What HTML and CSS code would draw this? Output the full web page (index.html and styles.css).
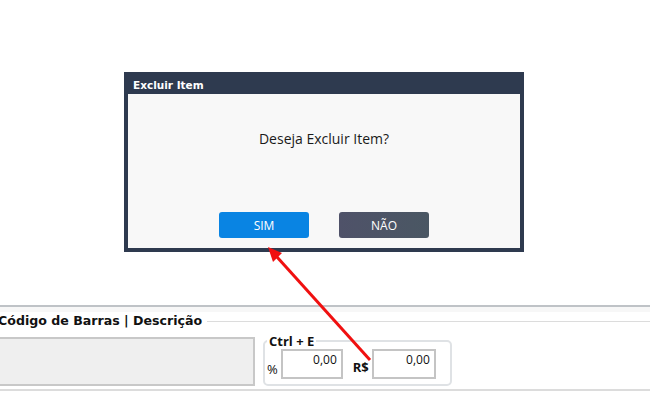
FILE: index.html
```html
<!DOCTYPE html>
<html>
<head>
    <title>Excluir Item</title>
    <link rel="stylesheet" href="styles.css">
</head>
<body>
    <div class="tela">
        <div class="area-vazia"></div>
        <div class="painel">
            <div class="faixa-topo"></div>
            <fieldset class="grupo">
                <legend>Código de Barras | Descrição</legend>
                <div class="linha">
                    <div class="campo-codigo"></div>
                    <fieldset class="desconto">
                        <legend>Ctrl + E</legend>
                        <span class="rotulo">%</span>
                        <input type="text" class="valor valor-pct" value="0,00" readonly>
                        <span class="rotulo rotulo-rs">R$</span>
                        <input type="text" class="valor valor-rs" value="0,00" readonly>
                    </fieldset>
                </div>
            </fieldset>
        </div>
    </div>

    <div class="modal">
        <div class="modal-titulo">Excluir Item</div>
        <div class="modal-corpo">
            <p class="mensagem">Deseja Excluir Item?</p>
            <div class="botoes">
                <button class="botao botao-sim">SIM</button>
                <button class="botao botao-nao">NÃO</button>
            </div>
        </div>
    </div>

    <!-- seta de anotacao -->
    <svg class="seta" width="650" height="393" viewBox="0 0 650 393">
        <line x1="370" y1="360" x2="277" y2="257" stroke="#f01010" stroke-width="3"/>
        <polygon points="268,247 282,253 273,262" fill="#f01010"/>
    </svg>
</body>
</html>
```

FILE: styles.css
```css
* {
    box-sizing: border-box;
}
html, body {
    margin: 0;
    background: #ffffff;
    width: 650px;
    height: 393px;
    overflow: hidden;
}
body {
    position: relative;
    font-family: "Open Sans", "Noto Sans", sans-serif;
}
.area-vazia {
    height: 305px;
}
.faixa-topo {
    height: 7px;
    border-top: 2px solid #bfc3c7;
    background: #f7f7f7;
}
.grupo {
    margin: 2px 0 0 -12px;
    padding: 0;
    border: 0;
    border-top: 1px solid #dcdcdc;
    border-bottom: 2px solid #dcdcdc;
    height: 77px;
    min-width: 0;
}
.grupo > legend {
    font-family: "DejaVu Sans", sans-serif;
    font-weight: bold;
    font-size: 12.6px;
    line-height: 14px;
    color: #111;
    padding: 0 5px 0 0;
    margin-left: 10px;
}
.linha {
    display: flex;
    align-items: flex-start;
    padding-top: 9px;
}
.campo-codigo {
    width: 267px;
    height: 49px;
    background: #efefef;
    border: 2px solid #c8c8c8;
}
.desconto {
    margin: -2px 0 0 8px;
    padding: 0 0 3px 2px;
    width: 189px;
    height: 51px;
    border: 2px solid #dfe2e5;
    border-radius: 5px;
    display: flex;
    align-items: center;
}
.desconto > legend {
    font-family: "Open Sans", sans-serif;
    font-weight: bold;
    font-size: 13px;
    line-height: 12px;
    color: #111;
    padding: 0 2px;
    margin-left: 0;
}
.rotulo {
    font-size: 13px;
    color: #111;
    margin-top: 10px;
}
.rotulo-rs {
    font-weight: bold;
    margin: 6px 3px 0 10px;
}
.valor {
    height: 30px;
    border: 2px solid #c4c4c4;
    background: #fff;
    font-family: "Open Sans", sans-serif;
    font-size: 12px;
    color: #111;
    text-align: right;
    padding: 0 4px 10px 0;
    outline: none;
}
.valor-pct {
    width: 62px;
    margin-left: 3px;
}
.valor-rs {
    width: 64px;
}

.modal {
    position: absolute;
    left: 124px;
    top: 72px;
    width: 400px;
    height: 180px;
    background: #2e3a4f;
    padding: 0 4px 4px 4px;
    display: flex;
    flex-direction: column;
}
.modal-titulo {
    height: 22px;
    line-height: 20px;
    padding: 3px 0 0 5px;
    color: #fff;
    font-family: "DejaVu Sans", sans-serif;
    font-weight: bold;
    font-size: 10.5px;
}
.modal-corpo {
    flex: 1;
    background: #f8f8f8;
    display: flex;
    flex-direction: column;
    justify-content: space-between;
    align-items: center;
    padding: 35px 0 10px 0;
}
.mensagem {
    margin: 0;
    font-size: 14px;
    line-height: 20px;
    color: #1a1a1a;
}
.botoes {
    display: flex;
    gap: 30px;
}
.botao {
    width: 90px;
    height: 26px;
    border: 0;
    border-radius: 3px;
    color: #fff;
    font-family: "Open Sans", sans-serif;
    font-size: 12px;
    padding: 0;
}
.botao-sim {
    background: #0984e3;
}
.botao-nao {
    background: linear-gradient(to right, #4f5269, #4a5763);
}

.seta {
    position: absolute;
    left: 0;
    top: 0;
    pointer-events: none;
}
```
